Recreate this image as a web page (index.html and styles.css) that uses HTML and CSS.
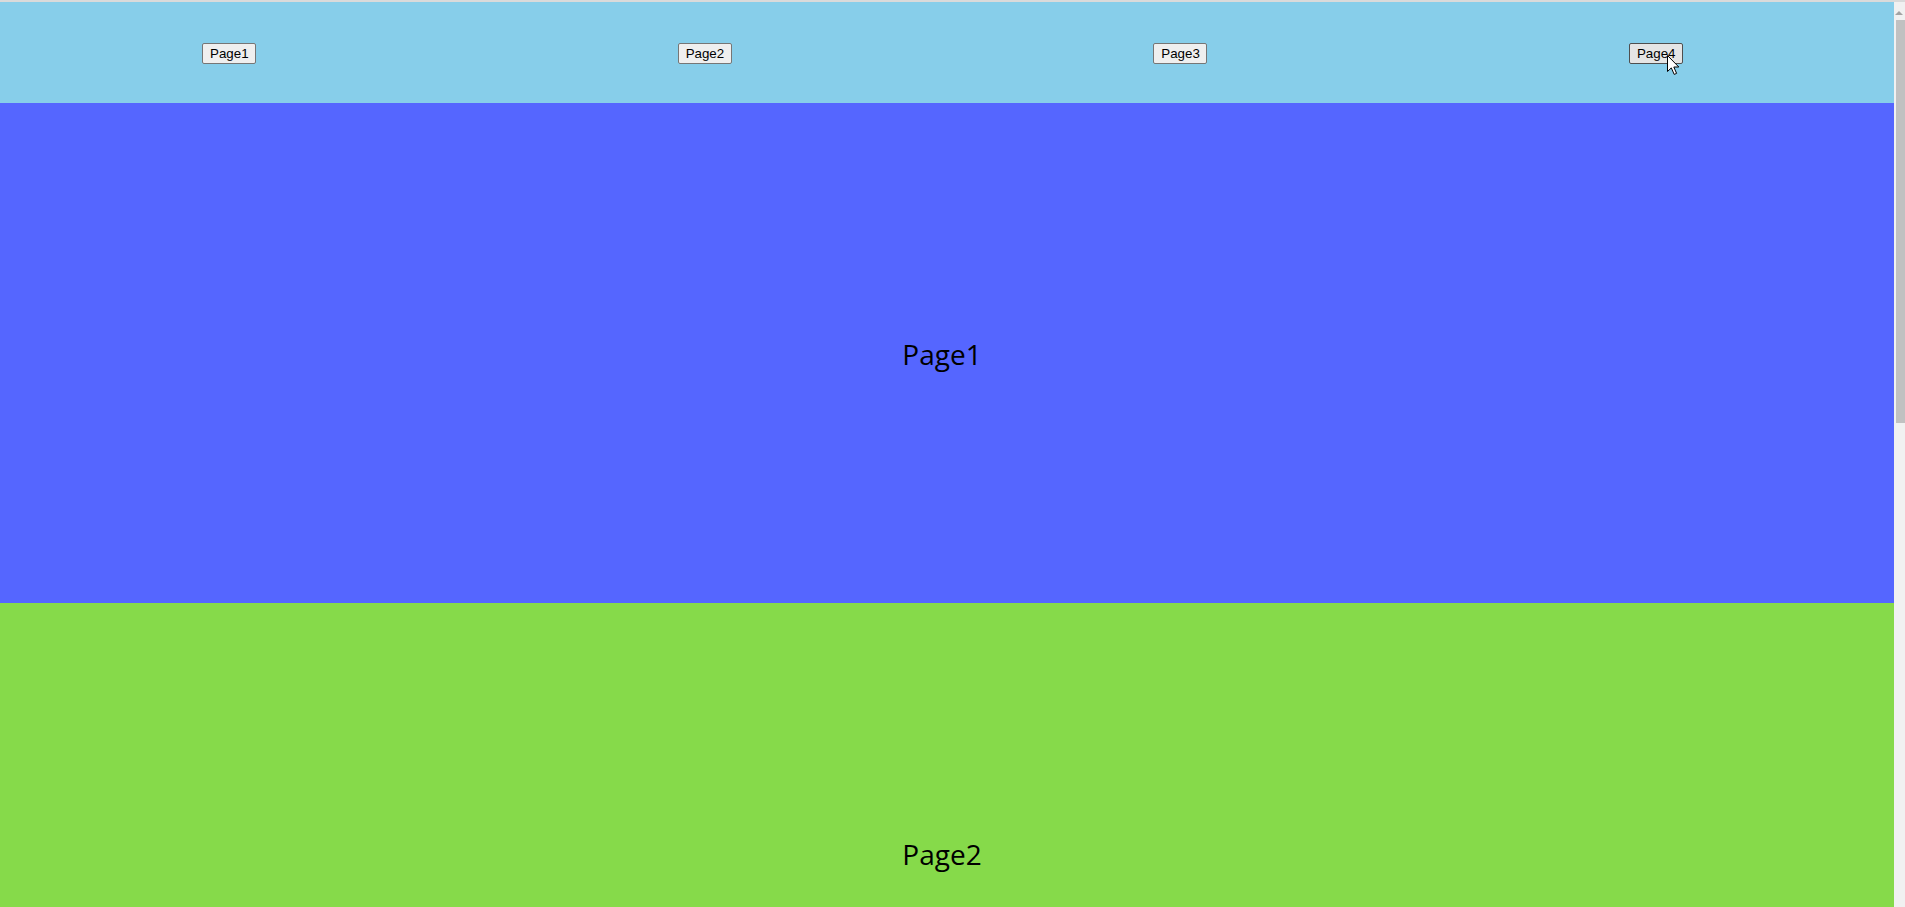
FILE: index.html
```html
<!DOCTYPE html>
<html lang="en">
<head>
<meta charset="utf-8">
<title>Pages</title>
<link rel="stylesheet" href="styles.css">
</head>
<body>
<div class="topline"></div>
<div class="frame">
  <div class="viewport">
    <nav class="nav">
      <button class="btn">Page1</button>
      <button class="btn">Page2</button>
      <button class="btn">Page3</button>
      <button class="btn btn-hover">Page4</button>
    </nav>
    <section class="page page-blue">Page1</section>
    <section class="page page-green">Page2</section>
  </div>
  <div class="scrollbar">
    <div class="arrow-up"></div>
    <div class="thumb"></div>
  </div>
</div>
<svg class="cursor" width="14" height="22" viewBox="0 0 14 22">
  <path d="M0.5 0.5 L0.5 16.5 L4.3 12.9 L7.2 19.4 L9.6 18.4 L6.8 12 L11.8 12 Z" fill="#ffffff" stroke="#000000" stroke-width="1" stroke-linejoin="miter"/>
</svg>
</body>
</html>
```
FILE: styles.css
```css
html, body {
  margin: 0;
  padding: 0;
  height: 907px;
  overflow: hidden;
}
body {
  font-family: "Open Sans", "Noto Sans", sans-serif;
  background: #ffffff;
  position: relative;
}
.topline {
  height: 2px;
  background: #dadada;
}
.frame {
  display: flex;
  height: 905px;
}
.viewport {
  width: 1894px;
  flex: none;
  overflow: hidden;
}
.nav {
  height: 101px;
  background: #87ceea;
  display: flex;
  align-items: center;
  justify-content: space-between;
  padding: 1px 211px 0 202px;
  box-sizing: border-box;
}
.btn {
  font-family: "Liberation Sans", Arial, sans-serif;
  font-size: 13.33px;
  color: #000;
  background: #efefef;
  border: 1px solid #767676;
  border-radius: 2px;
  padding: 2px 7px;
  height: 21px;
  width: 54px;
  line-height: 15px;
  box-sizing: border-box;
  margin: 0;
}
.btn-hover {
  background: #e5e5e5;
  border-color: #4f4f4f;
}
.page {
  height: 500px;
  box-sizing: border-box;
  display: flex;
  align-items: center;
  justify-content: center;
  font-size: 28px;
  color: #000;
  padding: 2px 10px 0 0;
}
.page-blue { background: #5566ff; }
.page-green { background: #86da4a; }
.scrollbar {
  width: 11px;
  flex: none;
  background: #f1f1f1;
  display: flex;
  flex-direction: column;
  align-items: flex-end;
}
.arrow-up {
  margin-top: 9px;
  margin-right: 2px;
  width: 0;
  height: 0;
  border-left: 4px solid transparent;
  border-right: 4px solid transparent;
  border-bottom: 4px solid #a3a3a3;
}
.thumb {
  margin-top: 5px;
  width: 9px;
  height: 403px;
  background: #c1c1c1;
}
.cursor {
  position: absolute;
  left: 1667px;
  top: 55px;
}
```
